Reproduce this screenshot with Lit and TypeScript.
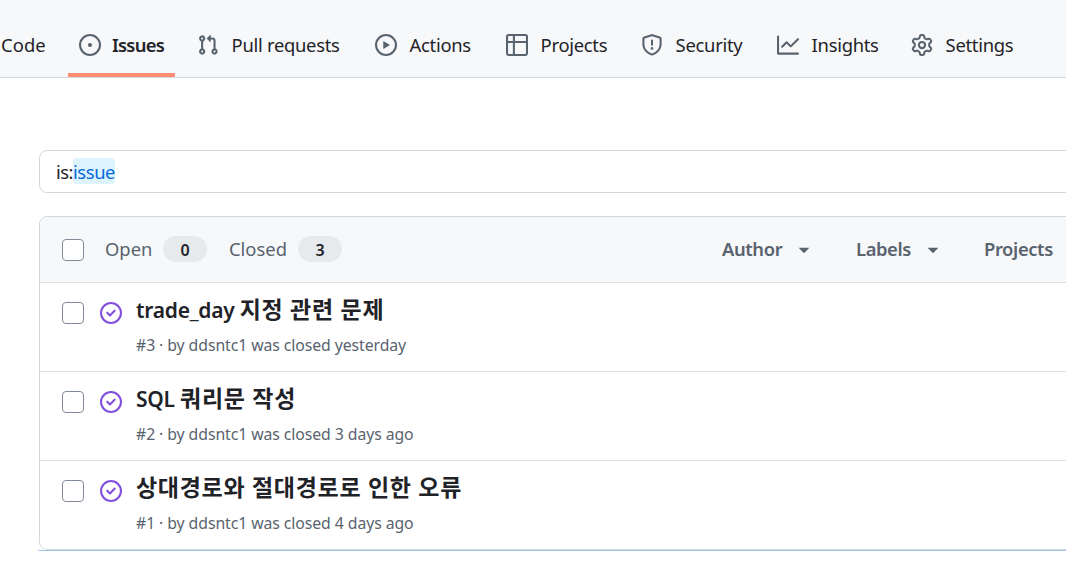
import { LitElement, html, css, svg } from "lit";
import { customElement } from "lit/decorators.js";

const paths: Record<string, string[]> = {
  issue: ["M8 9.5a1.5 1.5 0 1 0 0-3 1.5 1.5 0 0 0 0 3Z", "M8 0a8 8 0 1 1 0 16A8 8 0 0 1 8 0ZM1.5 8a6.5 6.5 0 1 0 13 0 6.5 6.5 0 0 0-13 0Z"],
  pull: ["M1.5 3.25a2.25 2.25 0 1 1 3 2.122v5.256a2.251 2.251 0 1 1-1.5 0V5.372A2.25 2.25 0 0 1 1.5 3.25Zm5.677-.177L9.573.677A.25.25 0 0 1 10 .854V2.5h1A2.5 2.5 0 0 1 13.5 5v5.628a2.251 2.251 0 1 1-1.5 0V5a1 1 0 0 0-1-1h-1v1.646a.25.25 0 0 1-.427.177L7.177 3.427a.25.25 0 0 1 0-.354ZM3.75 2.5a.75.75 0 1 0 0 1.5.75.75 0 0 0 0-1.5Zm0 9.5a.75.75 0 1 0 0 1.5.75.75 0 0 0 0-1.5Zm8.25.75a.75.75 0 1 0 1.5 0 .75.75 0 0 0-1.5 0Z"],
  play: ["M8 0a8 8 0 1 1 0 16A8 8 0 0 1 8 0ZM1.5 8a6.5 6.5 0 1 0 13 0 6.5 6.5 0 0 0-13 0Zm4.879-2.773 4.264 2.559a.25.25 0 0 1 0 .428l-4.264 2.559A.25.25 0 0 1 6 10.559V5.442a.25.25 0 0 1 .379-.215Z"],
  table: ["M0 1.75C0 .784.784 0 1.75 0h12.5C15.216 0 16 .784 16 1.75v12.5A1.75 1.75 0 0 1 14.25 16H1.75A1.75 1.75 0 0 1 0 14.25ZM6.5 6.5v8h7.75a.25.25 0 0 0 .25-.25V6.5Zm8-1.5V1.75a.25.25 0 0 0-.25-.25H6.5V5Zm-13 1.5v7.75c0 .138.112.25.25.25H5v-8ZM5 5V1.5H1.75a.25.25 0 0 0-.25.25V5Z"],
  shield: ["M7.467.133a1.748 1.748 0 0 1 1.066 0l5.25 1.68A1.75 1.75 0 0 1 15 3.48V7c0 1.566-.32 3.182-1.303 4.682-.983 1.498-2.585 2.813-5.032 3.855a1.697 1.697 0 0 1-1.33 0c-2.447-1.042-4.049-2.357-5.032-3.855C1.32 10.182 1 8.566 1 7V3.48a1.75 1.75 0 0 1 1.217-1.667Zm.61 1.429a.25.25 0 0 0-.153 0l-5.25 1.68a.25.25 0 0 0-.174.238V7c0 1.358.275 2.666 1.057 3.86.784 1.194 2.121 2.34 4.366 3.297a.196.196 0 0 0 .154 0c2.245-.956 3.582-2.104 4.366-3.298C13.225 9.666 13.5 8.36 13.5 7V3.48a.251.251 0 0 0-.174-.237l-5.25-1.68ZM8.75 4.75v3a.75.75 0 0 1-1.5 0v-3a.75.75 0 0 1 1.5 0ZM9 10.5a1 1 0 1 1-2 0 1 1 0 0 1 2 0Z"],
  graph: ["M1.5 1.75V13.5h13.75a.75.75 0 0 1 0 1.5H.75a.75.75 0 0 1-.75-.75V1.75a.75.75 0 0 1 1.5 0Zm14.28 2.53-5.25 5.25a.75.75 0 0 1-1.06 0L7 7.06 4.28 9.78a.751.751 0 0 1-1.042-.018.751.751 0 0 1-.018-1.042l3.25-3.25a.75.75 0 0 1 1.06 0L10 7.94l4.72-4.72a.751.751 0 0 1 1.042.018.751.751 0 0 1 .018 1.042Z"],
  gear: ["M8 0a8.2 8.2 0 0 1 .701.031C9.444.095 9.99.645 10.16 1.29l.288 1.107c.018.066.079.158.212.224.231.114.454.243.668.386.123.082.233.09.299.071l1.103-.303c.644-.176 1.392.021 1.82.63.27.385.506.792.704 1.218.315.675.111 1.422-.364 1.891l-.814.806c-.049.048-.098.147-.088.294.016.257.016.515 0 .772-.01.147.038.246.088.294l.814.806c.475.469.679 1.216.364 1.891a7.977 7.977 0 0 1-.704 1.217c-.428.61-1.176.807-1.82.63l-1.102-.302c-.067-.019-.177-.011-.3.071a5.909 5.909 0 0 1-.668.386c-.133.066-.194.158-.211.224l-.29 1.106c-.168.646-.715 1.196-1.458 1.26a8.006 8.006 0 0 1-1.402 0c-.743-.064-1.289-.614-1.458-1.26l-.289-1.106c-.018-.066-.079-.158-.212-.224a5.738 5.738 0 0 1-.668-.386c-.123-.082-.233-.09-.299-.071l-1.103.303c-.644.176-1.392-.021-1.82-.63a8.12 8.12 0 0 1-.704-1.218c-.315-.675-.111-1.422.363-1.891l.815-.806c.05-.048.098-.147.088-.294a6.214 6.214 0 0 1 0-.772c.01-.147-.038-.246-.088-.294l-.815-.806C.635 6.045.431 5.298.746 4.623a7.92 7.92 0 0 1 .704-1.217c.428-.61 1.176-.807 1.82-.63l1.102.302c.067.019.177.011.3-.071.214-.143.437-.272.668-.386.133-.066.194-.158.211-.224l.29-1.106C6.009.645 6.556.095 7.299.03 7.53.01 7.764 0 8 0Zm-.571 1.525c-.036.003-.108.036-.137.146l-.289 1.105c-.147.561-.549.967-.998 1.189-.173.086-.34.183-.5.29-.417.278-.97.423-1.529.27l-1.103-.303c-.109-.03-.175.016-.195.045-.22.312-.412.644-.573.99-.014.031-.021.11.059.19l.815.806c.411.406.562.957.53 1.456a4.709 4.709 0 0 0 0 .582c.032.499-.119 1.05-.53 1.456l-.815.806c-.081.08-.073.159-.059.19.162.346.353.677.573.989.02.03.085.076.195.046l1.102-.303c.56-.153 1.113-.008 1.53.27.161.107.328.204.501.29.447.222.85.629.997 1.189l.289 1.105c.029.109.101.143.137.146a6.6 6.6 0 0 0 1.142 0c.036-.003.108-.036.137-.146l.289-1.105c.147-.561.549-.967.998-1.189.173-.086.34-.183.5-.29.417-.278.97-.423 1.529-.27l1.103.303c.109.029.175-.016.195-.045.22-.313.411-.644.573-.99.014-.031.021-.11-.059-.19l-.815-.806c-.411-.406-.562-.957-.53-1.456a4.709 4.709 0 0 0 0-.582c-.032-.499.119-1.05.53-1.456l.815-.806c.081-.08.073-.159.059-.19a6.464 6.464 0 0 0-.573-.989c-.02-.03-.085-.076-.195-.046l-1.102.303c-.56.153-1.113.008-1.53-.27a4.44 4.44 0 0 0-.501-.29c-.447-.222-.85-.629-.997-1.189l-.289-1.105c-.029-.11-.101-.143-.137-.146a6.6 6.6 0 0 0-1.142 0ZM11 8a3 3 0 1 1-6 0 3 3 0 0 1 6 0ZM9.5 8a1.5 1.5 0 1 0-3.001.001A1.5 1.5 0 0 0 9.5 8Z"],
  closed: ["M11.28 6.78a.75.75 0 0 0-1.06-1.06L7.25 8.69 5.78 7.22a.75.75 0 0 0-1.06 1.06l2 2a.75.75 0 0 0 1.06 0l3.5-3.5Z", "M16 8A8 8 0 1 1 0 8a8 8 0 0 1 16 0Zm-1.5 0a6.5 6.5 0 1 0-13 0 6.5 6.5 0 0 0 13 0Z"],
  caret: ["m4.427 7.427 3.396 3.396a.25.25 0 0 0 .354 0l3.396-3.396A.25.25 0 0 0 11.396 7H4.604a.25.25 0 0 0-.177.427Z"],
};

const icon = (name: string) => html`<svg class="icon" viewBox="0 0 16 16" aria-hidden="true">${paths[name].map((d) => svg`<path d=${d}></path>`)}</svg>`;

const tabs = [
  { label: "Issues", icon: "issue", current: true },
  { label: "Pull requests", icon: "pull" },
  { label: "Actions", icon: "play" },
  { label: "Projects", icon: "table" },
  { label: "Security", icon: "shield" },
  { label: "Insights", icon: "graph" },
  { label: "Settings", icon: "gear" },
];

const issues = [
  { id: 3, latin: "trade_day ", hangul: "지정 관련 문제", when: "yesterday" },
  { id: 2, latin: "SQL ", hangul: "쿼리문 작성", when: "3 days ago" },
  { id: 1, latin: "", hangul: "상대경로와 절대경로로 인한 오류", when: "4 days ago" },
];

@customElement("app-root")
export class AppRoot extends LitElement {
  static styles = css`
    :host {
      display: block;
      height: 566px;
      overflow: hidden;
      background: #fff;
      color: #1f2328;
      font: 18.4px/28px "Noto Sans", "Noto Sans CJK KR", sans-serif;
      white-space: nowrap;
    }
    * { box-sizing: border-box; }
    .icon { width: 22px; height: 22px; flex: none; fill: currentColor; display: block; }
    nav {
      display: grid;
      grid-template-columns: 68px 118px 178px 131px 135px 136px 134px 130px;
      height: 78px;
      padding-top: 14px;
      background: #f6f8fa;
      border-bottom: 1px solid #d1d9e0;
    }
    .tab { display: flex; gap: 12.6px; align-items: center; padding: 0 0 1px 11px; }
    .tab .icon { color: #59636e; }
    .tab:first-child { padding-left: 1px; }
    .label { letter-spacing: -0.28px; }
    .tab:first-child .label { letter-spacing: 0.1px; }
    .tab.current {
      gap: 11px;
      width: 107px;
      padding: 3px 0 0 11px;
      border-bottom: 4px solid #fd8c73;
      border-radius: 1px;
    }
    .current .label { font-weight: 600; letter-spacing: -0.75px; }
    main { padding: 72px 0 0 39px; }
    .search {
      height: 43px;
      width: 1040px;
      border: 1px solid #d1d9e0;
      border-radius: 8px;
      padding: 7px 16px;
      line-height: 28px;
      letter-spacing: -0.5px;
    }
    .token { display: inline-block; height: 26px; line-height: 28px; vertical-align: top; background: #ddf4ff; color: #0969da; border-radius: 4px; letter-spacing: -0.4px; }
    .list { margin-top: 23px; width: 1040px; border: 1px solid #d1d9e0; border-radius: 8px; overflow: hidden; }
    .head { display: flex; align-items: center; height: 65px; padding-left: 22px; background: #f6f8fa; color: #59636e; }
    .box { width: 22px; height: 22px; flex: none; border: 1px solid #818b98; border-radius: 4px; background: #fff; }
    .state { display: flex; flex: none; align-items: center; justify-content: space-between; height: 26px; margin-top: -2px; }
    .state .label { letter-spacing: 0; }
    .open { width: 102px; margin-left: 21px; }
    .shut { width: 113px; margin-left: 22px; }
    .count {
      width: 44px;
      height: 26px;
      border-radius: 13px;
      background: #e6eaed;
      color: #1f2328;
      font-size: 16px;
      font-weight: 600;
      line-height: 28px;
      text-align: center;
    }
    .filters { display: grid; flex: none; grid-template-columns: 134px 128px 120px; margin: -2px 0 0 380px; font-weight: 600; }
    .filter { display: flex; align-items: center; gap: 11px; letter-spacing: -0.4px; }
    .row { display: flex; height: 89px; padding: 19px 0 0 22px; border-top: 1px solid #d9dfe4; }
    .row .icon { margin-left: 16px; color: #8250df; }
    .text { margin: -8px 0 0 14px; }
    .title { height: 32px; font-size: 21px; font-weight: 600; line-height: 31px; letter-spacing: -0.25px; }
    .hangul { font-size: 23px; letter-spacing: 0.7px; }
    .meta { margin-top: 7px; font-size: 15.8px; line-height: 24px; letter-spacing: -0.08px; color: #59636e; }
    .rule { height: 1px; margin-left: -1px; background: #a5c5ee; }
  `;

  render() {
    return html`
      <nav>
        <div class="tab"><span class="label">Code</span></div>
        ${tabs.map((t) => html`<div class="tab ${t.current ? "current" : ""}">${icon(t.icon)}<span class="label">${t.label}</span></div>`)}
      </nav>
      <main>
        <div class="search">is:<span class="token">issue</span></div>
        <section class="list">
          <div class="head">
            <span class="box"></span>
            <div class="state open"><span class="label">Open</span><span class="count">0</span></div>
            <div class="state shut"><span class="label">Closed</span><span class="count">3</span></div>
            <div class="filters">
              ${["Author", "Labels", "Projects"].map((f) => html`<div class="filter"><span>${f}</span>${icon("caret")}</div>`)}
            </div>
          </div>
          ${issues.map((i) => html`
            <div class="row">
              <span class="box"></span>${icon("closed")}
              <div class="text">
                <div class="title">${i.latin}<span class="hangul">${i.hangul}</span></div>
                <div class="meta">#${i.id} · by ddsntc1 was closed ${i.when}</div>
              </div>
            </div>`)}
        </section>
        <div class="rule"></div>
      </main>
    `;
  }
}
